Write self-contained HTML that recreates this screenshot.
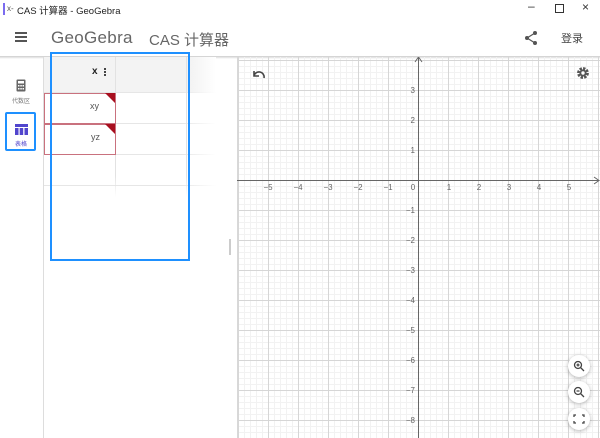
<!DOCTYPE html>
<html><head><meta charset="utf-8"><style>
*{margin:0;padding:0;box-sizing:border-box}
body{width:600px;height:438px;overflow:hidden;background:#fff;font-family:"Liberation Sans","Noto Sans CJK SC",sans-serif;position:relative}
.abs{position:absolute}
</style></head><body>
<!-- title bar -->
<div class="abs" style="left:3px;top:3px;width:2px;height:12px;background:#7b6cf0"></div>
<div class="abs" style="left:7px;top:4px;font-size:8px;color:#555">x-</div>
<div class="abs" style="left:17px;top:3px;font-size:9.5px;color:#222">CAS 计算器 - GeoGebra</div>
<div class="abs" style="left:528px;top:-1px;font-size:12px;color:#333">–</div>
<div class="abs" style="left:555px;top:4px;width:9px;height:9px;border:1px solid #333"></div>
<div class="abs" style="left:582px;top:0px;font-size:12px;color:#333">×</div>
<!-- header -->
<div class="abs" style="left:15px;top:32px;width:12px;height:2px;background:#555;box-shadow:0 4px 0 #555,0 8px 0 #555"></div>
<div class="abs" style="left:51px;top:28px;font-size:17px;color:#666;letter-spacing:0.3px">GeoGebra</div>
<div class="abs" style="left:149px;top:29px;font-size:15px;color:#666">CAS 计算器</div>
<svg class="abs" style="left:524px;top:30px" width="14" height="16"><circle cx="11" cy="3" r="2" fill="#555"/><circle cx="3" cy="8" r="2" fill="#555"/><circle cx="11" cy="13" r="2" fill="#555"/><path d="M11 3L3 8L11 13" stroke="#555" stroke-width="1.2" fill="none"/></svg>
<div class="abs" style="left:561px;top:30px;font-size:11px;color:#444">登录</div>
<div class="abs" style="left:0;top:56px;width:600px;height:3px;background:linear-gradient(#ccc,#fff0)"></div>
<!-- sidebar -->
<div class="abs" style="left:43px;top:57px;width:1px;height:381px;background:#ddd"></div>
<svg class="abs" style="left:16px;top:79px" width="10" height="13"><rect x="0.5" y="0.5" width="9" height="12" rx="1" fill="#666"/><rect x="2" y="2" width="6" height="2.5" fill="#fff"/><g fill="#fff"><rect x="2" y="6" width="1.5" height="1.5"/><rect x="4.3" y="6" width="1.5" height="1.5"/><rect x="6.5" y="6" width="1.5" height="1.5"/><rect x="2" y="9" width="1.5" height="1.5"/><rect x="4.3" y="9" width="1.5" height="1.5"/><rect x="6.5" y="9" width="1.5" height="1.5"/></g></svg>
<div class="abs" style="left:12px;top:96px;font-size:6px;color:#777">代数区</div>
<div class="abs" style="left:5px;top:112px;width:31px;height:39px;border:2px solid #1e90ff;border-radius:2px"></div>
<svg class="abs" style="left:15px;top:124px" width="13" height="11"><rect x="0" y="0" width="13" height="3" fill="#5145cd"/><rect x="0" y="4" width="3.5" height="7" fill="#5145cd"/><rect x="4.7" y="4" width="3.5" height="7" fill="#5145cd"/><rect x="9.5" y="4" width="3.5" height="7" fill="#5145cd"/></svg>
<div class="abs" style="left:15px;top:139px;font-size:6px;color:#5145cd">表格</div>
<!-- table panel -->
<div class="abs" style="left:44px;top:57px;width:172px;height:35px;background:linear-gradient(90deg,#f3f3f3 85%,#fff)"></div>
<div class="abs" style="left:44px;top:92px;width:172px;height:1px;background:linear-gradient(90deg,#e6e6e6 80%,#fff0)"></div>
<div class="abs" style="left:44px;top:123px;width:172px;height:1px;background:linear-gradient(90deg,#e6e6e6 80%,#fff0)"></div>
<div class="abs" style="left:44px;top:154px;width:172px;height:1px;background:linear-gradient(90deg,#e6e6e6 80%,#fff0)"></div>
<div class="abs" style="left:44px;top:185px;width:172px;height:1px;background:linear-gradient(90deg,#e6e6e6 80%,#fff0)"></div>
<div class="abs" style="left:115px;top:57px;width:1px;height:140px;background:linear-gradient(#e2e2e2 85%,#fff0)"></div>
<div class="abs" style="left:186px;top:57px;width:1px;height:140px;background:linear-gradient(#e2e2e2 85%,#fff0)"></div>
<div class="abs" style="left:92px;top:66px;font-size:10px;font-weight:bold;color:#222">x</div>
<div class="abs" style="left:104px;top:68px;width:2px;height:2px;background:#444;box-shadow:0 3px 0 #444,0 6px 0 #444"></div>
<div class="abs" style="left:44px;top:93px;width:72px;height:31px;border:1px solid #c9717e;background:#fff"></div>
<div class="abs" style="left:105px;top:93px;width:0;height:0;border-left:10px solid transparent;border-top:10px solid #a80f1f"></div>
<div class="abs" style="left:90px;top:101px;font-size:9px;color:#555">xy</div>
<div class="abs" style="left:44px;top:124px;width:72px;height:31px;border:1px solid #c9717e;background:#fff"></div>
<div class="abs" style="left:105px;top:124px;width:0;height:0;border-left:10px solid transparent;border-top:10px solid #a80f1f"></div>
<div class="abs" style="left:91px;top:132px;font-size:9px;color:#555">yz</div>
<div class="abs" style="left:50px;top:52px;width:140px;height:209px;border:2px solid #1e90ff"></div>
<div class="abs" style="left:229px;top:239px;width:2px;height:16px;background:#ccc"></div>
<!-- graph -->
<svg class="abs" style="left:237px;top:57px" width="363" height="381">
<defs>
<pattern id="mn" x="1" y="3" width="6" height="6" patternUnits="userSpaceOnUse"><path d="M0 0.5H6M0.5 0V6" stroke="#f2f2f2" stroke-width="1" fill="none"/></pattern>
<pattern id="mj" x="1" y="3" width="30" height="30" patternUnits="userSpaceOnUse"><path d="M0 0.5H30M0.5 0V30" stroke="#d6d6d6" stroke-width="1" fill="none"/></pattern>
</defs>
<rect width="363" height="381" fill="url(#mn)"/>
<rect width="363" height="381" fill="url(#mj)"/>
<rect x="0" y="0" width="1.5" height="381" fill="#d8d8d8"/>
<path d="M0 123.5H362M181.5 0V381" stroke="#666" stroke-width="1"/>
<path d="M357 120L362 123.5L357 127M178 5L181.5 0L185 5" stroke="#666" fill="none"/>
<g font-size="8" fill="#666" font-family="Liberation Sans,sans-serif" text-anchor="middle">
<text x="31" y="133">−5</text><text x="61" y="133">−4</text><text x="91" y="133">−3</text><text x="121" y="133">−2</text><text x="151" y="133">−1</text><text x="176" y="133">0</text>
<text x="212" y="133">1</text><text x="242" y="133">2</text><text x="272" y="133">3</text><text x="302" y="133">4</text><text x="332" y="133">5</text>
</g>
<g font-size="8" fill="#666" font-family="Liberation Sans,sans-serif" text-anchor="end">
<text x="178" y="36">3</text><text x="178" y="66">2</text><text x="178" y="96">1</text>
<text x="178" y="156">−1</text><text x="178" y="186">−2</text><text x="178" y="216">−3</text><text x="178" y="246">−4</text><text x="178" y="276">−5</text><text x="178" y="306">−6</text><text x="178" y="336">−7</text><text x="178" y="366">−8</text>
</g>
<path d="M17 19A5 5 0 1 1 27 21M17 14V19H22" stroke="#444" stroke-width="1.6" fill="none"/>
<g transform="translate(346,16)"><circle r="4.6" fill="none" stroke="#555" stroke-width="2.6" stroke-dasharray="2.4 1.2"/><circle r="3.6" fill="#555"/><circle r="1.7" fill="#fff"/></g>
<g fill="#fff" style="filter:drop-shadow(0 1px 2px rgba(0,0,0,.3))"><circle cx="342" cy="309" r="11"/><circle cx="342" cy="335" r="11"/><circle cx="342" cy="362" r="11"/></g>
<g stroke="#444" stroke-width="1.3" fill="none"><circle cx="341" cy="308" r="3.5"/><path d="M343.5 310.5L347 314M339.5 308H342.5M341 306.5V309.5"/>
<circle cx="341" cy="334" r="3.5"/><path d="M343.5 336.5L347 340M339.5 334H342.5"/>
<path d="M337 360V358H339M345 358H347V360M347 364V366H345M339 366H337V364"/></g>
</svg>
</body></html>
